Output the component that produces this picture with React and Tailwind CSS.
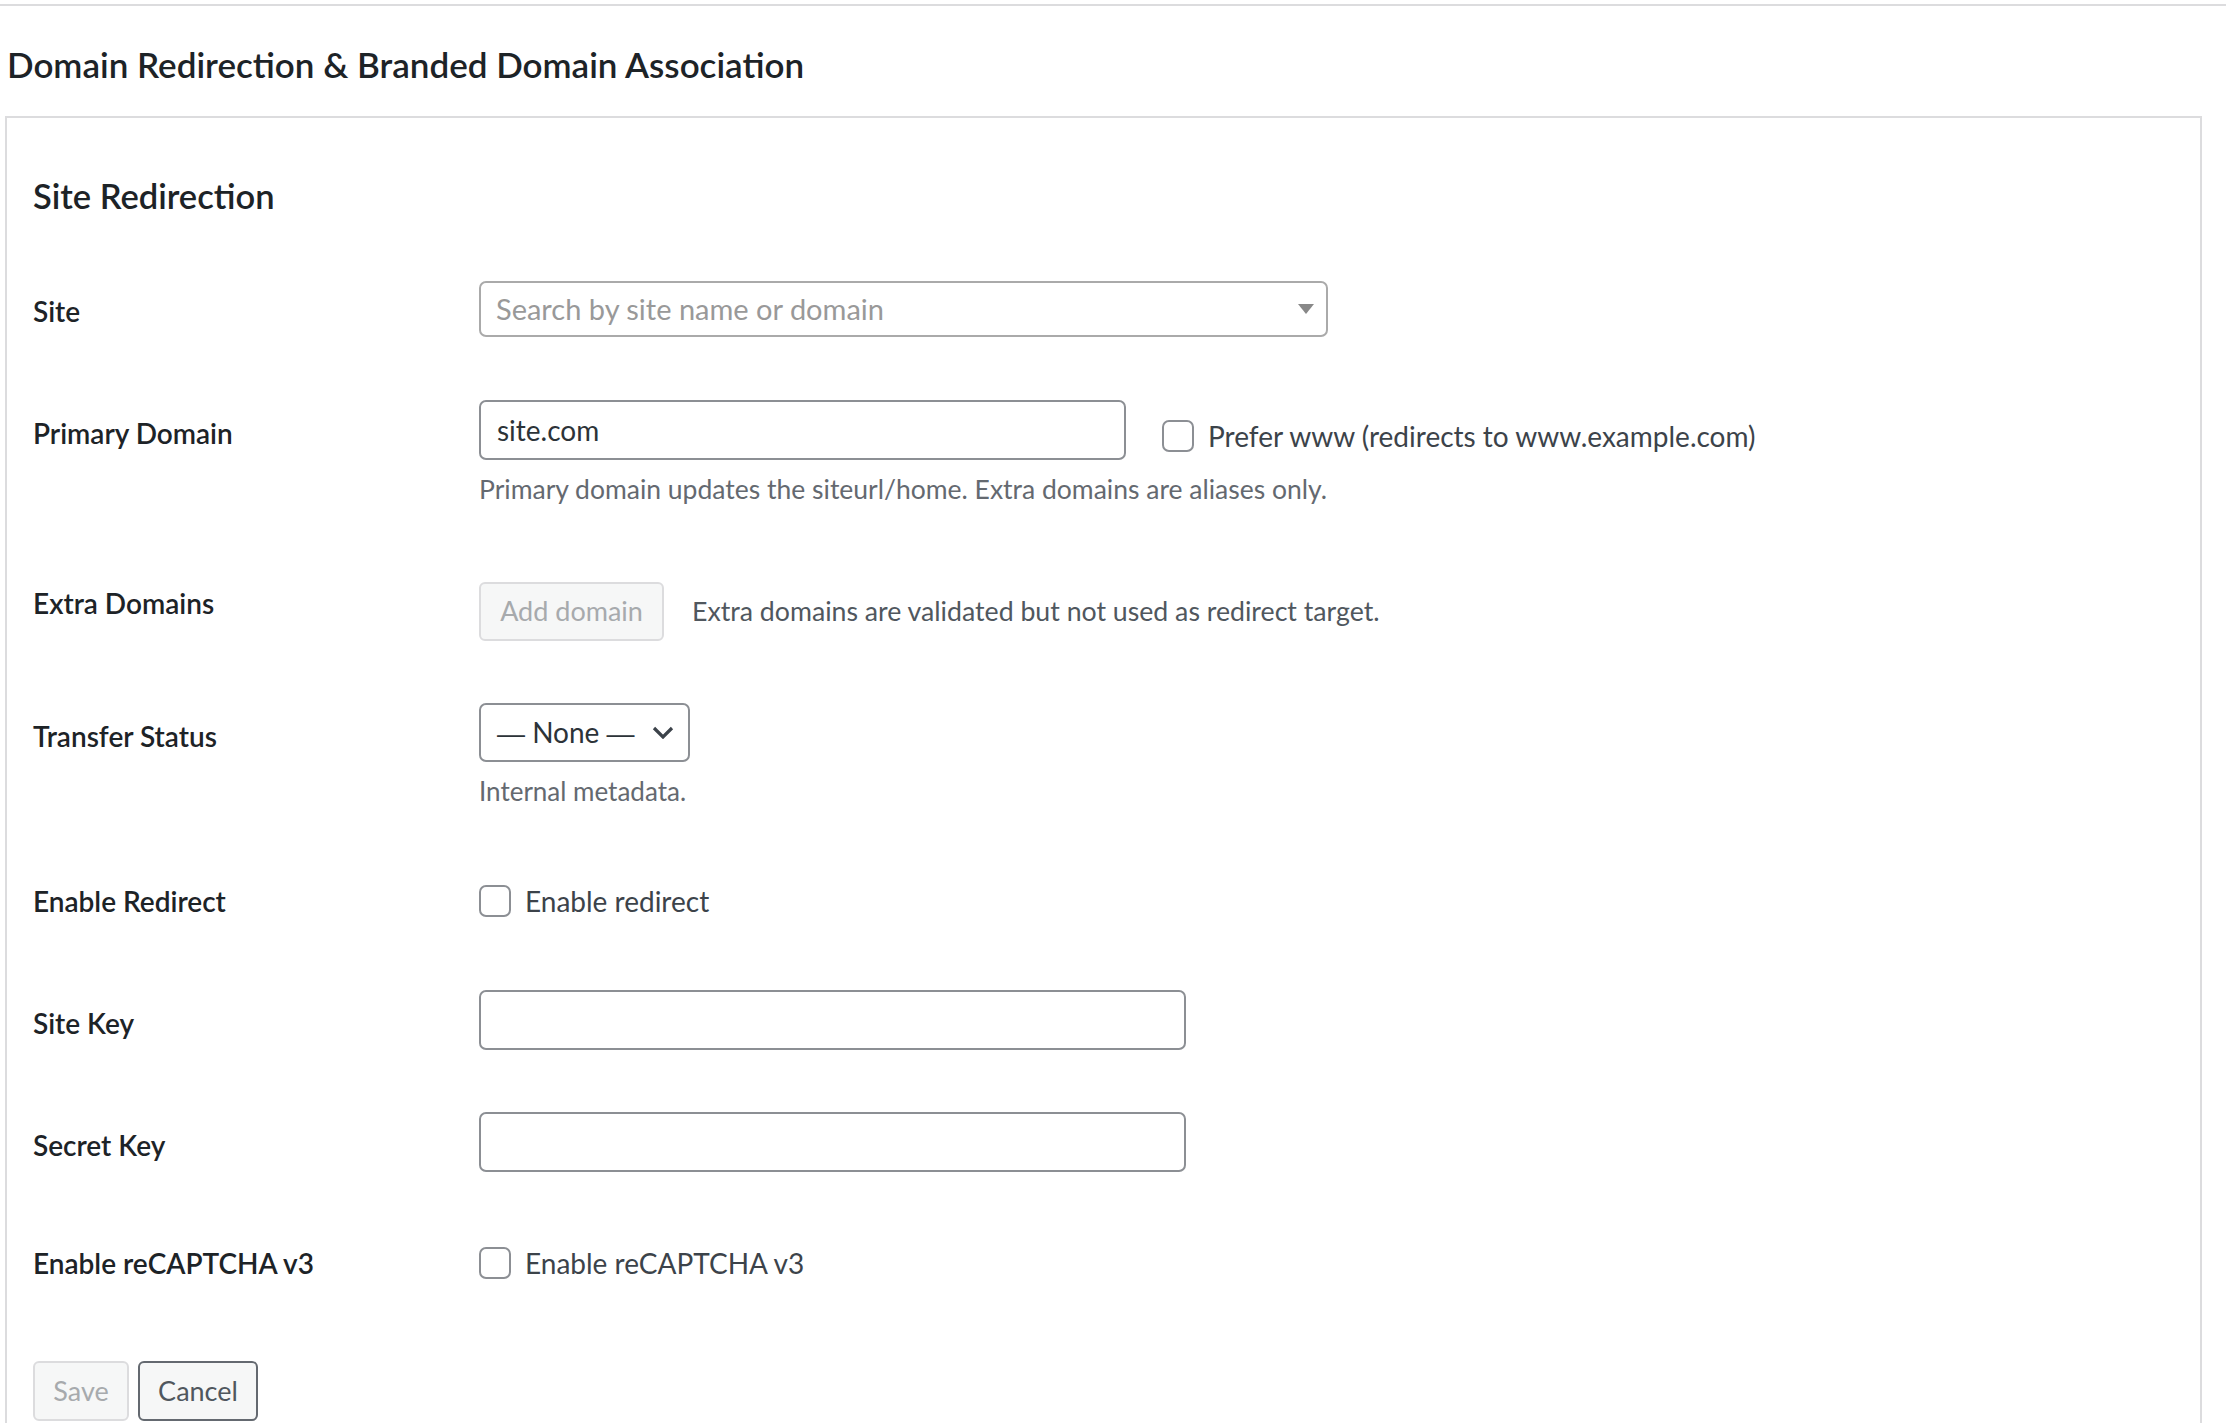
import React from "react";

const LABEL =
  "w-[446px] shrink-0 text-[28px] leading-[36px] font-semibold text-[#1d2327]";

function Checkbox() {
  return (
    <span className="block w-[32px] h-[32px] shrink-0 rounded-[7px] border-2 border-[#8c8f94] bg-white" />
  );
}

function CheckLabel({ text }) {
  return (
    <label className="flex items-center gap-[14px] h-[36px]">
      <Checkbox />
      <span className="text-[28px] leading-[36px] text-[#3c434a]">{text}</span>
    </label>
  );
}

function TextInput({ value = "", width }) {
  return (
    <input
      type="text"
      defaultValue={value}
      className={`${width} h-[60px] rounded-[7px] border-2 border-[#8c8f94] bg-white px-[16px] text-[28px] text-[#2c3338] outline-none`}
    />
  );
}

function App() {
  return (
    <div className="h-screen overflow-hidden bg-white [font-family:Lato,sans-serif]">
      <div className="mt-[4px] h-[2px] bg-[#dcdcde]" />

      <div className="pl-[5px] pr-[24px]">
        <h1 className="mt-[36px] pl-[2px] text-[35px] leading-[44px] font-semibold text-[#1d2327]">
          Domain Redirection &amp; Branded Domain Association
        </h1>

        <div className="mt-[30px] border-2 border-[#dcdcde] pl-[26px] pb-[40px]">
          <h2 className="mt-[56px] text-[34.5px] leading-[44px] font-semibold text-[#1d2327]">
            Site Redirection
          </h2>

          {/* Site */}
          <div className="mt-[63px] flex items-start">
            <div className={`${LABEL} mt-[12px]`}>Site</div>
            <div className="w-[849px] h-[56px] rounded-[7px] border-2 border-[#aaaaaa] bg-white flex items-center justify-between pl-[15px] pr-[12px]">
              <span className="text-[29px] text-[#999999]">
                Search by site name or domain
              </span>
              <span className="w-0 h-0 border-l-[8px] border-r-[8px] border-t-[10px] border-l-transparent border-r-transparent border-t-[#888888]" />
            </div>
          </div>

          {/* Primary Domain */}
          <div className="mt-[63px] flex items-start">
            <div className={`${LABEL} mt-[15px]`}>Primary Domain</div>
            <div>
              <div className="flex items-start gap-[36px]">
                <TextInput value="site.com" width="w-[647px]" />
                <div className="mt-[18px]">
                  <CheckLabel text="Prefer www (redirects to www.example.com)" />
                </div>
              </div>
              <p className="mt-[11px] text-[26.5px] leading-[36px] text-[#646970]">
                Primary domain updates the siteurl/home. Extra domains are aliases only.
              </p>
            </div>
          </div>

          {/* Extra Domains */}
          <div className="mt-[75px] flex items-start">
            <div className={`${LABEL} mt-[3px]`}>Extra Domains</div>
            <div className="flex items-center gap-[28px]">
              <button
                disabled
                className="h-[59px] w-[185px] rounded-[6px] border-2 border-[#dcdcde] bg-[#f6f7f7] text-[27px] text-[#a7aaad]"
              >
                Add domain
              </button>
              <span className="text-[26.7px] text-[#50575e]">
                Extra domains are validated but not used as redirect target.
              </span>
            </div>
          </div>

          {/* Transfer Status */}
          <div className="mt-[62px] flex items-start">
            <div className={`${LABEL} mt-[15px]`}>Transfer Status</div>
            <div>
              <div className="w-[211px] h-[59px] rounded-[7px] border-2 border-[#8c8f94] bg-white flex items-center justify-between pl-[16px] pr-[14px]">
                <span className="text-[28px] text-[#2c3338]">
                  <span className="[font-family:'Liberation_Sans',sans-serif]">—</span> None{" "}
                  <span className="[font-family:'Liberation_Sans',sans-serif]">—</span>
                </span>
                <svg width="22" height="13" viewBox="0 0 22 13">
                  <polyline
                    points="2,2 11,11 20,2"
                    fill="none"
                    stroke="#3c434a"
                    strokeWidth="3.2"
                  />
                </svg>
              </div>
              <p className="mt-[11px] text-[26px] leading-[36px] text-[#646970]">
                Internal metadata.
              </p>
            </div>
          </div>

          {/* Enable Redirect */}
          <div className="mt-[74px] flex items-center">
            <div className={LABEL}>Enable Redirect</div>
            <CheckLabel text="Enable redirect" />
          </div>

          {/* Site Key */}
          <div className="mt-[71px] flex items-start">
            <div className={`${LABEL} mt-[15px]`}>Site Key</div>
            <TextInput width="w-[707px]" />
          </div>

          {/* Secret Key */}
          <div className="mt-[62px] flex items-start">
            <div className={`${LABEL} mt-[15px]`}>Secret Key</div>
            <TextInput width="w-[707px]" />
          </div>

          {/* reCAPTCHA */}
          <div className="mt-[73px] flex items-center">
            <div className={LABEL}>Enable reCAPTCHA v3</div>
            <CheckLabel text="Enable reCAPTCHA v3" />
          </div>

          <div className="mt-[80px] flex gap-[9px]">
            <button
              disabled
              className="h-[60px] w-[96px] rounded-[6px] border-2 border-[#dcdcde] bg-[#f6f7f7] text-[27px] text-[#a7aaad]"
            >
              Save
            </button>
            <button className="h-[60px] w-[120px] rounded-[6px] border-2 border-[#646970] bg-[#f6f7f7] text-[27px] text-[#50575e]">
              Cancel
            </button>
          </div>
        </div>
      </div>
    </div>
  );
}

export default App;
